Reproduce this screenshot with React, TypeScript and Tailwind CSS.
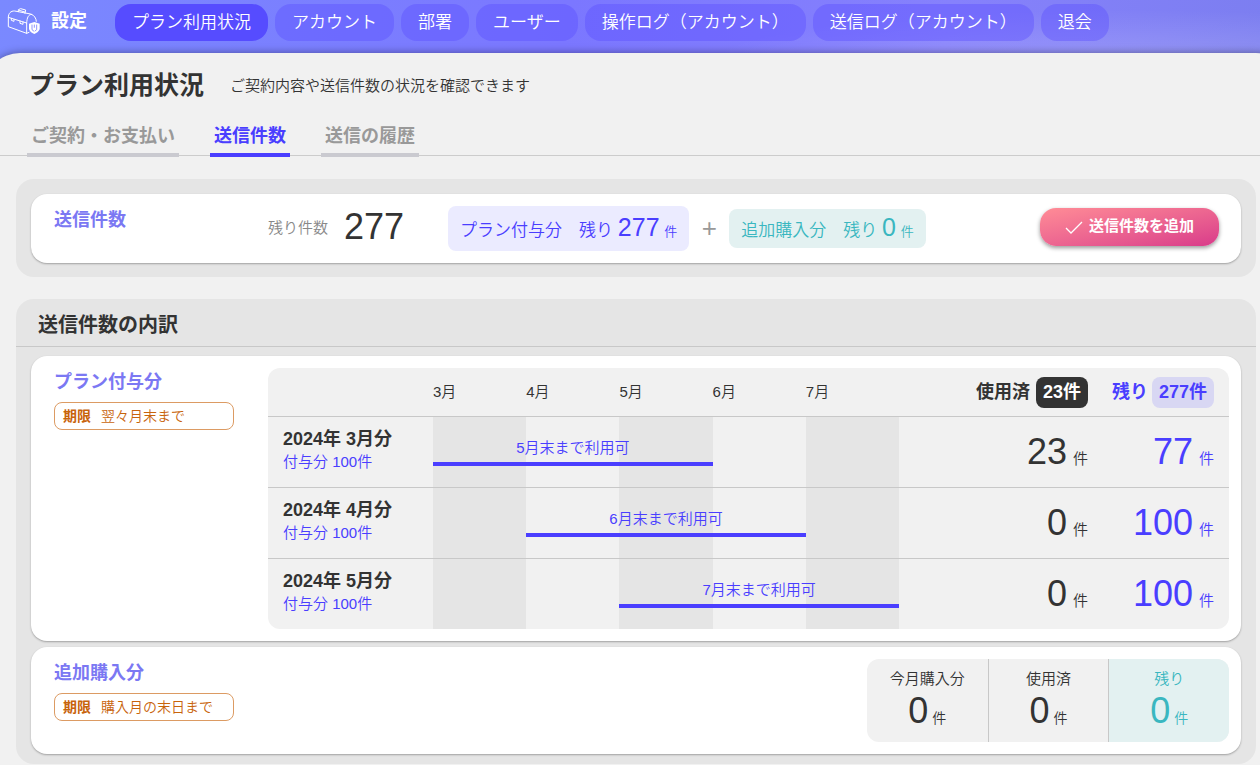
import { ReactNode } from "react";
import clsx from "clsx";

const navItems = ["プラン利用状況", "アカウント", "部署", "ユーザー", "操作ログ（アカウント）", "送信ログ（アカウント）", "退会"]
const tabs = ["ご契約・お支払い", "送信件数", "送信の履歴"]
const months = ["3月", "4月", "5月", "6月", "7月"]

const grants = [
    { month: "3月", start: 0, until: "5月末まで利用可", granted: 100, used: 23, rest: 77 },
    { month: "4月", start: 1, until: "6月末まで利用可", granted: 100, used: 0, rest: 100 },
    { month: "5月", start: 2, until: "7月末まで利用可", granted: 100, used: 0, rest: 100 },
]

function ToolboxIcon() {
    return (
        <svg viewBox="21 18 102 84" className="w-[34px] h-7 shrink-0" fill="none" stroke="white" strokeWidth="3" strokeLinejoin="round" strokeLinecap="round" aria-hidden="true">
            <path d="M25 49V77L80 97V66L25 49C25 38 32 29 44 30L92 39C102 42 109 52 109 61" />
            <path d="M80 66C81 50 85 40 95 40M80 97L87 94M55 32V26L62 23L77 27L75 37M58 28L74 33" />
            <path d="M34 52V58L42 61V55M60 60V67L69 70V63" />
            <path d="M103 63L119 68V84C117 91 111 96 103 99C94 96 89 91 87 84V68Z" fill="white" stroke="none" />
            <path d="M96 72V86L101 90M110 72V86L105 90M103 72V79" stroke="#7a80ff" strokeWidth="2.5" />
        </svg>
    )
}

function Count({ value, className, unitClassName = "text-[15px] ml-1.5" }: { value: number; className?: string; unitClassName?: string }) {
    return (
        <span className={clsx("whitespace-nowrap", className)}>
            <span className="text-[36px] leading-[40px]">{value}</span>
            <span className={unitClassName}>件</span>
        </span>
    )
}

function Card({ title, limit, children }: { title: string; limit?: string; children: ReactNode }) {
    return (
        <div className="flex bg-white rounded-2xl shadow-[0_1px_2px_rgba(0,0,0,0.3)] pl-[23px] pr-3 py-3">
            <div className="w-[214px] shrink-0">
                <h3 className="text-[18px] leading-7 font-bold text-[#7b78f3]">{title}</h3>
                {limit && (
                    <p className="w-[180px] h-7 mt-1.5 flex items-center gap-2.5 px-2 text-[14px] leading-6 text-[#c8640c] border border-[#dc9b63] rounded-lg">
                        <b className="font-bold">期限</b>
                        <span>{limit}</span>
                    </p>
                )}
            </div>
            {children}
        </div>
    )
}

export default function App() {
    return (
        <div className="min-h-screen overflow-hidden flex flex-col font-[350] text-[15px] text-[#333] font-['Liberation_Sans','Noto_Sans_CJK_JP',sans-serif] bg-[radial-gradient(ellipse_420px_50px_at_1130px_60px,rgba(255,255,255,0.18),transparent),linear-gradient(100deg,#7a89ff_0%,#7b77ff_45%,#8681fc_75%,#7c7ef0_100%)] bg-[length:100%_60px] bg-no-repeat">
            {/* Header */}
            <header className="h-[53px] flex items-start pl-[7px] pt-1">
                <div className="w-[108px] shrink-0 flex items-center gap-2.5 pt-[3px] text-white">
                    <ToolboxIcon />
                    <span className="text-[18px] font-bold">設定</span>
                </div>
                <nav className="flex gap-[7px]">
                    {navItems.map((item, i) => (
                        <a
                            key={item}
                            href="#"
                            className={clsx(
                                "h-[37px] px-[17px] rounded-2xl text-[17px] leading-[37px] text-white whitespace-nowrap",
                                i === 0 ? "bg-[#564cff]" : "bg-[#5a4dff]/40"
                            )}
                        >
                            {item}
                        </a>
                    ))}
                </nav>
            </header>

            <main className="flex-1 -ml-4 -mr-8 bg-[#f1f1f1] rounded-t-[36px] shadow-[0_0_8px_rgba(0,0,0,0.4)]">
                <div className="flex items-center gap-[26px] pl-[45px] pt-1 h-[62px]">
                    <h1 className="text-[25px] font-bold">プラン利用状況</h1>
                    <p>ご契約内容や送信件数の状況を確認できます</p>
                </div>

                {/* Tabs */}
                <nav className="flex gap-[31px] mt-1.5 h-[35px] pl-[43px] border-b border-[#ccc]">
                    {tabs.map(tab => (
                        <a
                            key={tab}
                            href="#"
                            className={clsx(
                                "h-9 px-1 text-[18px] leading-[30px] font-bold border-b-4",
                                tab === "送信件数" ? "text-[#4a3eff] border-[#4a3eff]" : "text-[#999] border-[#cacad0]"
                            )}
                        >
                            {tab}
                        </a>
                    ))}
                </nav>

                <div className="pl-8 pr-9 pt-[23px]">
                    {/* Remaining total */}
                    <section className="bg-[#e5e5e5] rounded-[18px] px-[15px] pt-[15px] pb-3.5">
                        <Card title="送信件数">
                            <div className="flex-1 flex items-center">
                                <span className="text-[#888]">残り件数</span>
                                <span className="text-[36px] leading-[40px] ml-4 pb-1">277</span>
                                <div className="h-[45px] ml-11 px-3 rounded-lg bg-[#ebebff] text-[#4a3eff] text-[17px] leading-[43px] whitespace-nowrap">
                                    プラン付与分　残り <span className="text-[25px]">277</span> <span className="text-[13px]">件</span>
                                </div>
                                <span className="w-10 text-center text-[26px] text-[#999]">+</span>
                                <div className="h-[39px] px-3 rounded-lg bg-[#e3f1f1] text-[#3ab7c0] text-[17px] leading-[37px] whitespace-nowrap">
                                    追加購入分　残り <span className="text-[25px]">0</span> <span className="text-[13px]">件</span>
                                </div>
                                <button className="ml-auto mr-2.5 mb-1 w-[179px] h-[38px] flex items-center justify-center gap-1.5 rounded-2xl text-white font-bold bg-linear-to-br from-[#ff8c96] to-[#d93a8a] shadow-[0_2px_4px_rgba(0,0,0,0.4)]">
                                    <svg viewBox="0 0 18 14" className="w-[18px] h-3.5" fill="none" stroke="currentColor" strokeWidth="1.3" aria-hidden="true">
                                        <path d="M1 8L6 13L17 2" />
                                    </svg>
                                    送信件数を追加
                                </button>
                            </div>
                        </Card>
                    </section>

                    {/* Breakdown */}
                    <section className="mt-[22px] bg-[#e5e5e5] rounded-[18px] pb-2.5">
                        <h2 className="h-12 pl-[22px] text-[20px] leading-[52px] font-bold border-b border-[#c8c8c8]">送信件数の内訳</h2>
                        <div className="flex flex-col gap-1.5 px-[15px] pt-[9px]">
                            <Card title="プラン付与分" limit="翌々月末まで">
                                <div className="flex-1 rounded-xl overflow-hidden bg-[#f1f1f1]">
                                    <table className="w-full table-fixed border-separate border-spacing-0">
                                        <thead>
                                            <tr className="h-12">
                                                <th className="w-[165px]"></th>
                                                {months.map(m => (
                                                    <th key={m} className="w-[9.7%] text-left font-[350]">{m}</th>
                                                ))}
                                                <th className="pr-[15px] text-right text-[18px] whitespace-nowrap font-bold">
                                                    使用済
                                                    <span className="inline-block ml-1.5 px-[7px] h-[31px] leading-[30px] rounded-lg bg-[#333] text-white">23件</span>
                                                </th>
                                                <th className="w-[126px] pr-[15px] text-right text-[18px] text-[#4a3eff] whitespace-nowrap font-bold">
                                                    残り
                                                    <span className="inline-block ml-1 px-[7px] h-[31px] leading-[30px] rounded-lg bg-[#d8d7f3]">277件</span>
                                                </th>
                                            </tr>
                                        </thead>
                                        <tbody>
                                            {grants.map(g => (
                                                <tr key={g.month} className="h-[71px] *:border-t *:border-[#c8c8c8]">
                                                    <td className="pl-[15px] pb-1">
                                                        <p className="text-[18px] leading-6 font-bold">2024年 {g.month}分</p>
                                                        <p className="leading-[22px] text-[#4a3eff]">付与分 {g.granted}件</p>
                                                    </td>
                                                    {months.map((m, i) => (
                                                        <td key={m} className={clsx("relative", i % 2 === 0 && "bg-[#e5e5e5]")}>
                                                            {i === g.start && (
                                                                <div className="absolute z-10 left-0 top-[18px] w-[300%] h-[31px] text-center leading-[26px] text-[#4a3eff] border-b-4 border-[#4a3eff]">
                                                                    {g.until}
                                                                </div>
                                                            )}
                                                        </td>
                                                    ))}
                                                    <td className="pr-[15px] text-right">
                                                        <Count value={g.used} />
                                                    </td>
                                                    <td className="pr-[15px] text-right">
                                                        <Count value={g.rest} className="text-[#4a3eff]" />
                                                    </td>
                                                </tr>
                                            ))}
                                        </tbody>
                                    </table>
                                </div>
                            </Card>

                            <Card title="追加購入分" limit="購入月の末日まで">
                                <dl className="ml-auto w-[362px] h-[83px] grid grid-cols-3 rounded-xl overflow-hidden bg-[#f1f1f1] text-center">
                                    {["今月購入分", "使用済", "残り"].map((label, i) => (
                                        <div
                                            key={label}
                                            className={clsx("pt-2", i > 0 && "border-l border-[#c8c8c8]", i === 2 && "bg-[#e3f1f1] text-[#3ab7c0]")}
                                        >
                                            <dt className="leading-6">{label}</dt>
                                            <dd className="leading-[46px]">
                                                <Count value={0} unitClassName="text-[14px] ml-1" />
                                            </dd>
                                        </div>
                                    ))}
                                </dl>
                            </Card>
                        </div>
                    </section>
                </div>
            </main>
        </div>
    )
}
